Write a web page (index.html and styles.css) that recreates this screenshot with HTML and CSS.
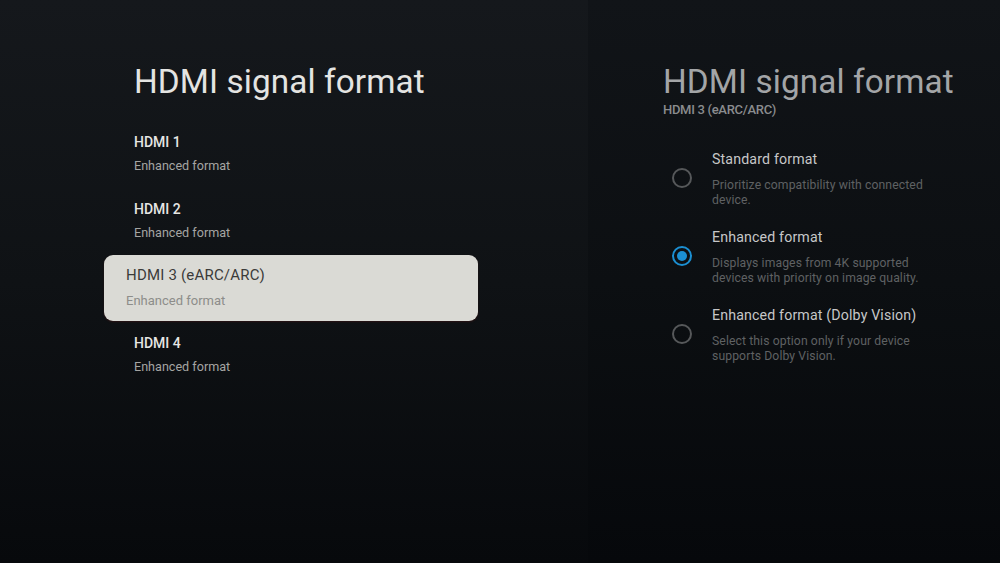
FILE: index.html
```html
<!DOCTYPE html>
<html lang="en">
<head>
<meta charset="utf-8">
<title>HDMI signal format</title>
<link rel="stylesheet" href="styles.css">
</head>
<body>
<div class="screen">
  <section class="pane-left">
    <h1 class="title">HDMI signal format</h1>
    <ul class="ports">
      <li class="port">
        <div class="port-name">HDMI 1</div>
        <div class="port-sub">Enhanced format</div>
      </li>
      <li class="port">
        <div class="port-name">HDMI 2</div>
        <div class="port-sub">Enhanced format</div>
      </li>
      <li class="port port-focused">
        <div class="port-name">HDMI 3 (eARC/ARC)</div>
        <div class="port-sub">Enhanced format</div>
      </li>
      <li class="port">
        <div class="port-name">HDMI 4</div>
        <div class="port-sub">Enhanced format</div>
      </li>
    </ul>
  </section>
  <section class="pane-right">
    <h2 class="title title-dim">HDMI signal format</h2>
    <div class="subtitle">HDMI 3 (eARC/ARC)</div>
    <ul class="options">
      <li class="option">
        <span class="radio"></span>
        <div class="option-text">
          <div class="option-name">Standard format</div>
          <div class="option-desc">Prioritize compatibility with connected device.</div>
        </div>
      </li>
      <li class="option">
        <span class="radio radio-on"></span>
        <div class="option-text">
          <div class="option-name">Enhanced format</div>
          <div class="option-desc">Displays images from 4K supported devices with priority on image quality.</div>
        </div>
      </li>
      <li class="option">
        <span class="radio"></span>
        <div class="option-text">
          <div class="option-name">Enhanced format (Dolby Vision)</div>
          <div class="option-desc">Select this option only if your device supports Dolby Vision.</div>
        </div>
      </li>
    </ul>
  </section>
</div>
</body>
</html>
```

FILE: styles.css
```css
* { box-sizing: border-box; }
html, body {
  margin: 0;
  padding: 0;
  background: #07090c;
}
body {
  font-family: Roboto, "Noto Sans", "Liberation Sans", sans-serif;
}
ul { list-style: none; margin: 0; padding: 0; }
h1, h2 { margin: 0; font-weight: 400; }

.screen {
  width: 1000px;
  height: 563px;
  display: flex;
  overflow: hidden;
}

.pane-left {
  width: 588px;
  padding: 62px 0 0 134px;
  background: linear-gradient(180deg, #15181c 0%, #0f1215 50%, #07090c 100%);
}

.pane-right {
  flex: 1;
  padding: 62px 0 0 75px;
  background: linear-gradient(180deg, #111418 0%, #0c0f12 50%, #06080b 100%);
}

.title {
  font-size: 33.3px;
  line-height: 40px;
  color: #e4e4e2;
  letter-spacing: 0.1px;
  white-space: nowrap;
}
.title-dim { color: #a3a5a7; }

.ports {
  margin: 19px 0 0 -30px;
  width: 374px;
}
.port {
  height: 67px;
  padding: 12px 30px 0 30px;
}
.port-name {
  font-size: 14px;
  line-height: 18px;
  font-weight: 500;
  color: #e6e6e4;
}
.port-sub {
  margin-top: 6px;
  font-size: 12.6px;
  line-height: 18px;
  color: #a5a5a3;
}
.port-focused {
  height: 66px;
  margin-bottom: 1px;
  padding: 11px 22px 0 22px;
  background: #dadad5;
  border-radius: 9px;
  box-shadow: 0 1px 2px rgba(60, 20, 20, 0.6);
}
.port-focused .port-name {
  font-size: 15px;
  font-weight: 400;
  color: #3b3b3a;
  letter-spacing: 0.2px;
}
.port-focused .port-sub {
  margin-top: 8px;
  font-size: 13px;
  color: #8d8d8a;
}

.subtitle {
  font-size: 13px;
  line-height: 16px;
  font-weight: 500;
  color: #8a8c8e;
  letter-spacing: -0.3px;
}

.options {
  margin: 32px 0 0 9px;
  display: flex;
  flex-direction: column;
  gap: 20px;
}
.option {
  display: flex;
  align-items: flex-start;
  gap: 20px;
}
.radio {
  flex: none;
  width: 20px;
  height: 20px;
  margin-top: 18px;
  border: 2px solid #56585a;
  border-radius: 50%;
  display: flex;
  align-items: center;
  justify-content: center;
}
.radio-on {
  border-color: #1b8fd2;
}
.radio-on::after {
  content: "";
  width: 10px;
  height: 10px;
  border-radius: 50%;
  background: #1b8fd2;
}
.option-text { width: 240px; }
.option-name {
  font-size: 14.2px;
  line-height: 18px;
  color: #c6c7c8;
  white-space: nowrap;
  letter-spacing: 0.15px;
}
.option-desc {
  margin-top: 10px;
  font-size: 12.2px;
  line-height: 15px;
  color: #5f6163;
  letter-spacing: 0.1px;
}
```
